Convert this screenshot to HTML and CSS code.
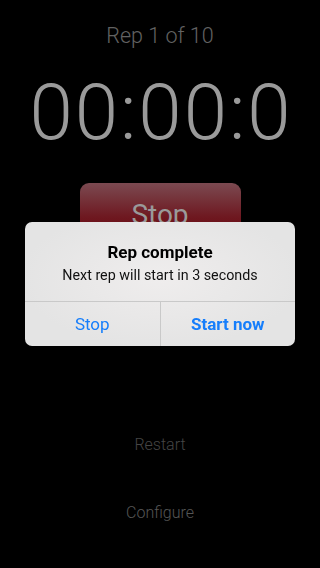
FILE: index.html
```html
<!DOCTYPE html>
<html lang="en">
<head>
    <meta charset="UTF-8">
    <meta name="viewport" content="width=device-width, initial-scale=1.0">
    <title>Rep Timer</title>
    <link rel="stylesheet" href="styles.css">
</head>
<body>
    <div class="screen">
        <div class="rep-count">Rep 1 of 10</div>
        <div class="timer">00:00:0</div>
        <button class="stop-btn">Stop</button>
        <div class="link restart">Restart</div>
        <div class="link configure">Configure</div>
    </div>

    <div class="overlay">
        <div class="alert">
            <div class="alert-body">
                <h2>Rep complete</h2>
                <p>Next rep will start in 3 seconds</p>
            </div>
            <div class="alert-actions">
                <button class="alert-btn">Stop</button>
                <button class="alert-btn primary">Start now</button>
            </div>
        </div>
    </div>
</body>
</html>
```

FILE: styles.css
```css
* {
    margin: 0;
    padding: 0;
    box-sizing: border-box;
}

body {
    background-color: #000;
    font-family: Roboto, "Liberation Sans", sans-serif;
    width: 320px;
    height: 568px;
    overflow: hidden;
}

.screen {
    display: flex;
    flex-direction: column;
    align-items: center;
    height: 568px;
}

.rep-count {
    margin-top: 22px;
    font-size: 21.5px;
    font-weight: 300;
    line-height: 28px;
    color: #626262;
}

.timer {
    margin-top: 19px;
    padding-left: 2px;
    font-size: 78px;
    font-weight: 300;
    line-height: 88px;
    color: #9a9a9a;
    letter-spacing: 2px;
}

.stop-btn {
    margin-top: 26px;
    width: 161px;
    height: 62px;
    border: none;
    border-radius: 9px;
    background: linear-gradient(#7b4a51, #6e1820 55%, #680008);
    color: #9a9a9a;
    font-family: inherit;
    font-size: 28px;
    font-weight: 400;
}

.link {
    font-size: 16px;
    font-weight: 300;
    line-height: 20px;
}

.restart {
    margin-top: 190px;
    color: #454545;
}

.configure {
    margin-top: 48px;
    color: #555;
}

.overlay {
    position: fixed;
    inset: 0;
    display: flex;
    justify-content: center;
    align-items: center;
}

.alert {
    width: 270px;
    height: 124px;
    border-radius: 7px;
    overflow: hidden;
    background: radial-gradient(ellipse 140px 70px at 50% 45%, #efeded, #e4e4e4);
    display: flex;
    flex-direction: column;
}

.alert-body {
    height: 79px;
    text-align: center;
    padding-top: 19px;
    color: #000;
}

.alert-body h2 {
    font-size: 17px;
    font-weight: 700;
    line-height: 22px;
}

.alert-body p {
    margin-top: 3px;
    font-size: 14.3px;
    line-height: 18px;
    color: #111;
}

.alert-actions {
    display: flex;
    flex: 1;
    border-top: 1px solid #c9c9c9;
}

.alert-btn {
    flex: 1;
    border: none;
    background: transparent;
    color: #167efb;
    font-family: inherit;
    font-size: 17px;
    font-weight: 400;
}

.alert-btn + .alert-btn {
    border-left: 1px solid #c9c9c9;
}

.alert-btn.primary {
    font-weight: 700;
}
```
